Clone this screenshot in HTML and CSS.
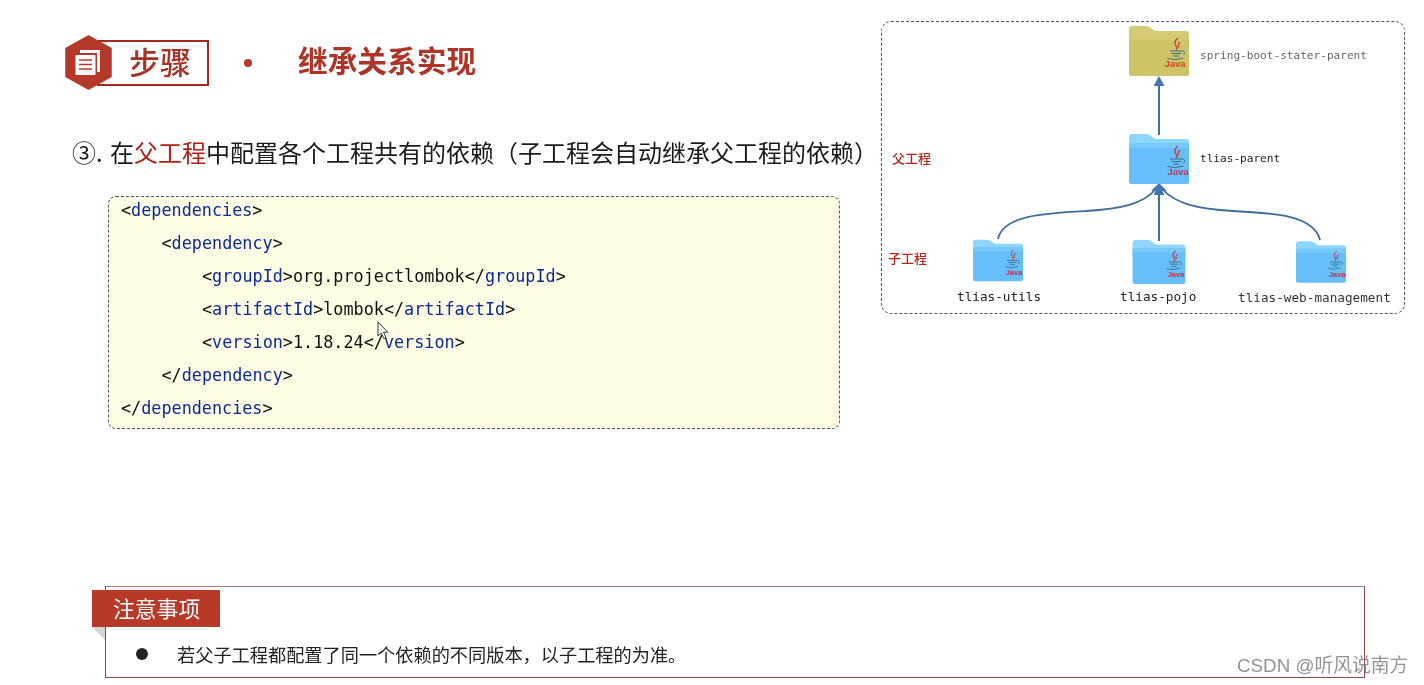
FILE: index.html
```html
<!DOCTYPE html>
<html lang="zh">
<head>
<meta charset="utf-8">
<title>继承关系实现</title>
<link rel="stylesheet" href="styles.css">
</head>
<body>
<svg class="defs" width="0" height="0" aria-hidden="true">
  <symbol id="folder" viewBox="0 0 60 50">
    <path class="f-back" d="M0 3Q0 0 3 0H18Q20 0 22 2L26 5H57Q60 5 60 8V20H0Z"/>
    <rect class="f-body" x="0" y="9" width="60" height="41" rx="2.5"/>
    <path class="f-band" d="M0 11.5Q0 9 2.5 9H57.5Q60 9 60 11.5V14H0Z"/>
    <path class="j-steam" d="M49 12Q44 16 47 20Q49 22 47 24M51 16Q48 19 50 21.500"/>
    <path class="j-cup" d="M41 25H53M42.500 27.500H52M44 30H50M38.500 32.500Q46 35 54 32M53 25Q57.500 25.500 54.500 29"/>
  </symbol>
</svg>
<main class="slide">
  <div class="top">
    <section class="main-col">
      <header class="head">
        <div class="badge">
          <svg class="hex" viewBox="0 0 47 55" width="47" height="55" aria-hidden="true">
            <path class="hex-bg" d="M23.500 1L46 13.500V41.500L23.500 54L1 41.500V13.500Z"/>
            <path class="hex-pg" d="M15 15H35V37H32V18H15Z"/>
            <rect class="hex-pg" x="10.500" y="20" width="20" height="20" rx="1"/>
            <path class="hex-ln" d="M14 25H27M14 29.500H27M14 34H27"/>
          </svg>
          <span class="badge-label">步骤</span>
        </div>
        <span class="dot"></span>
        <h1 class="title">继承关系实现</h1>
      </header>
      <p class="lead"><span class="num">③.</span>在<em>父工程</em>中配置各个工程共有的依赖（子工程会自动继承父工程的依赖）</p>
      <div class="code">
        <div class="ln">&lt;<b>dependencies</b>&gt;</div>
        <div class="ln i1">&lt;<b>dependency</b>&gt;</div>
        <div class="ln i2">&lt;<b>groupId</b>&gt;org.projectlombok&lt;/<b>groupId</b>&gt;</div>
        <div class="ln i2">&lt;<b>artifactId</b>&gt;lombok&lt;/<b>artifactId</b>&gt;</div>
        <div class="ln i2">&lt;<b>version</b>&gt;1.18.24&lt;/<b>version</b>&gt;</div>
        <div class="ln i1">&lt;/<b>dependency</b>&gt;</div>
        <div class="ln">&lt;/<b>dependencies</b>&gt;</div>
        <svg class="cursor" viewBox="0 0 12 19" width="12" height="19" aria-hidden="true">
          <path d="M1 1V15L4.300 12L6.800 17.500L9 16.500L6.500 11.200H10.800Z"/>
        </svg>
      </div>
    </section>
    <section class="diagram">
      <svg class="canvas" viewBox="0 0 524 293" width="524" height="293" aria-hidden="true">
        <path class="link" d="M278 114V62"/>
        <path class="head-a" d="M278 55L283.500 65H272.500Z"/>
        <path class="link thin" d="M117 218C122 194 165 192 205 190C240 188 262 183 275 168"/>
        <path class="link thin" d="M439 219C433 194 392 192 352 190C317 188 295 183 281 168"/>
        <path class="link" d="M278 220V172"/>
        <path class="head-a" d="M278 162L286 170L281 169.500L283.500 174H272.500L275 169.500L270 170Z"/>
        <use class="yellow" href="#folder" x="248" y="5" width="60" height="50"/>
        <use class="blue" href="#folder" x="248" y="113" width="60" height="50"/>
        <use class="blue" href="#folder" x="92" y="217" width="50" height="45" preserveAspectRatio="none"/>
        <use class="blue" href="#folder" x="251" y="219" width="54" height="44" preserveAspectRatio="none"/>
        <use class="blue" href="#folder" x="415" y="219" width="50" height="44" preserveAspectRatio="none"/>
        <text class="j-text j-gold" x="294" y="46" text-anchor="middle">Java</text>
        <text class="j-text j-crim" x="297" y="154" text-anchor="middle">Java</text>
        <text class="j-text j-sm" x="133" y="254" text-anchor="middle">Java</text>
        <text class="j-text j-sm" x="295" y="256" text-anchor="middle">Java</text>
        <text class="j-text j-sm" x="456" y="256" text-anchor="middle">Java</text>
      </svg>
      <span class="tag tag-parent">父工程</span>
      <span class="tag tag-child">子工程</span>
      <span class="nm nm-spring">spring-boot-stater-parent</span>
      <span class="nm nm-parent">tlias-parent</span>
      <span class="nm lg nm-utils">tlias-utils</span>
      <span class="nm lg nm-pojo">tlias-pojo</span>
      <span class="nm lg nm-web">tlias-web-management</span>
    </section>
  </div>
  <section class="note">
    <div class="note-tab">注意事项</div>
    <ul class="note-list">
      <li>若父子工程都配置了同一个依赖的不同版本，以子工程的为准。</li>
    </ul>
  </section>
  <div class="mark">CSDN @听风说南方</div>
</main>
</body>
</html>
```

FILE: styles.css
```css
* { box-sizing: border-box; }
html, body { margin: 0; padding: 0; background: #fff; }
body { font-family: "Noto Sans CJK SC", "Noto Sans", sans-serif; }
.defs { position: absolute; }

.slide { position: relative; width: 1424px; height: 685px; overflow: hidden; background: #fff; filter: blur(0.3px); }
.top { display: flex; height: 586px; }
.main-col { width: 881px; padding-top: 35px; }

.head { display: flex; align-items: center; height: 55px; margin-left: 65px; }
.badge { position: relative; display: flex; align-items: center; justify-content: flex-end; width: 144px; height: 46px; margin-top: 1px; padding-left: 32px; }
.hex { position: absolute; z-index: 1; left: 0; top: -5px; }
.hex-bg { fill: #b5392a; stroke: #b5392a; stroke-width: 1.500; stroke-linejoin: round; }
.hex-pg { fill: #fff; }
.hex-ln { fill: none; stroke: #b5392a; stroke-width: 1.500; }
.badge-label { flex: 1; height: 46px; padding-left: 32px; border: 2px solid #a02a20; border-left: 0; font-size: 31px; font-weight: 500; line-height: 38px; color: #a83226; }
.dot { width: 8px; height: 8px; margin-left: 35px; border-radius: 50%; background: #b5392a; }
.title { margin: -6px 0 0 46px; font-size: 29.700px; line-height: 46px; font-weight: 700; color: #ad3427; }

.lead { margin: 44px 0 0 72px; font-size: 24px; line-height: 36px; white-space: nowrap; color: #1a1a1a; }
.num { display: inline-block; width: 38px; }
.lead em { font-style: normal; color: #b01e12; }

.code { position: relative; display: flex; flex-direction: column; gap: 13px; width: 732px; height: 233px; margin: 26px 0 0 108px; padding: 3px 0 0 12px; background: #fefce4; border: 1px dashed #555; border-radius: 8px; font-family: "DejaVu Sans Mono", "Liberation Mono", monospace; font-size: 16.800px; line-height: 20px; color: #111; white-space: pre; }
.code b { font-weight: 400; color: #0b2a94; }
.i1 { padding-left: 40.500px; }
.i2 { padding-left: 81px; }
.cursor { position: absolute; left: 268px; top: 124px; }
.cursor path { fill: #fff; stroke: #333; stroke-width: 1; }

.diagram { position: relative; width: 524px; height: 293px; margin-top: 21px; border: 1px dashed #555; border-radius: 10px; }
.canvas { position: absolute; left: -1px; top: -1px; }
.link { fill: none; stroke: #3d6f9f; stroke-width: 2; }
.thin { stroke: #3f6ca0; stroke-width: 1.800; }
.head-a { fill: #4474b4; }

.f-back { fill: var(--f-back); }
.f-body { fill: var(--f-body); }
.f-band { fill: var(--f-band); }
.j-steam { fill: none; stroke: #c8372d; stroke-width: 1.200; }
.j-cup { fill: none; stroke: #3f6d8e; stroke-width: 1; }
.j-text { font-family: "Liberation Sans", sans-serif; font-weight: 700; }
.j-gold { font-size: 9.500px; fill: #dc4420; }
.j-crim { font-size: 9.500px; fill: #c8304c; }
.j-sm { font-size: 7.500px; fill: #c8304c; }
.yellow { --f-back: #d4cb76; --f-body: #cdc468; --f-band: #d2c972; }
.blue { --f-back: #8ed6ff; --f-body: #66bff8; --f-band: #78c9fb; }

.tag { position: absolute; font-size: 13px; font-weight: 500; line-height: 18px; color: #b5281c; }
.tag-parent { left: 10px; top: 127px; }
.tag-child { left: 6px; top: 227px; }
.nm { position: absolute; font-family: "DejaVu Sans Mono", "Liberation Mono", monospace; font-size: 11.100px; line-height: 16px; white-space: nowrap; color: #222; }
.lg { font-size: 12.700px; }
.nm-spring { left: 318px; top: 26px; color: #666; }
.nm-parent { left: 318px; top: 129px; }
.nm-utils { left: 75px; top: 267px; }
.nm-pojo { left: 238px; top: 267px; }
.nm-web { left: 356px; top: 268px; color: #333; }

.note { position: relative; width: 1260px; height: 92px; margin-left: 105px; border: 1px solid #8c4a4a; border-top-color: #a87878; }
.note-tab { position: absolute; left: -14px; top: 3px; width: 128px; height: 37px; padding-left: 21px; background: #b63a27; font-size: 21.800px; line-height: 35px; color: #fff; }
.note-tab::after { content: ""; position: absolute; left: 0; top: 37px; border-top: 13px solid #d4d4d4; border-left: 13px solid transparent; }
.note-list { margin: 0; padding: 49px 0 0 30px; list-style: none; }
.note-list li { display: flex; align-items: center; font-size: 18.200px; line-height: 36px; color: #222; }
.note-list li::before { content: ""; flex: none; width: 12px; height: 12px; margin-right: 29px; border-radius: 50%; background: #222; }

.mark { position: absolute; left: 1237px; top: 652px; font-family: "Liberation Sans", "Noto Sans CJK SC", sans-serif; font-size: 18.800px; line-height: 28px; white-space: nowrap; color: rgba(120, 120, 120, 0.8); }
```
